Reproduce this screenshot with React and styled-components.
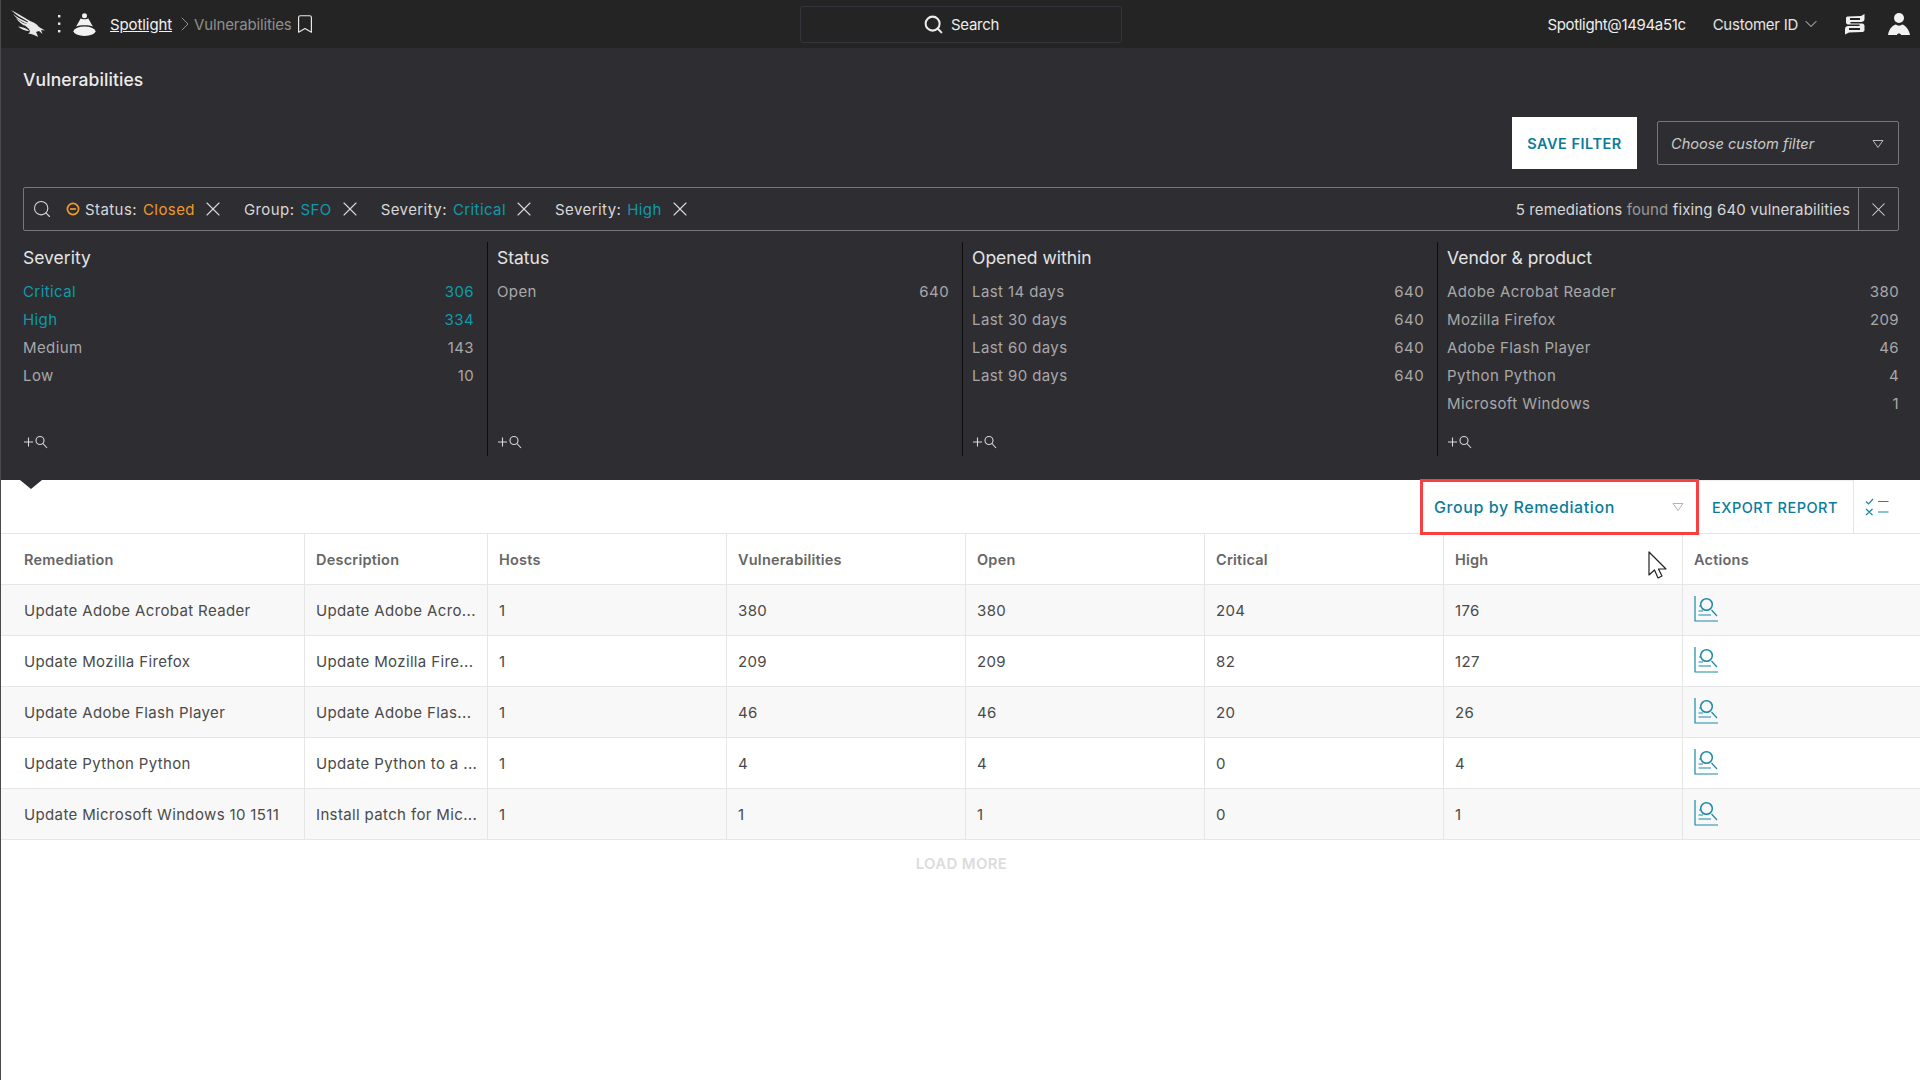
import React from "react";
import styled, { createGlobalStyle } from "styled-components";
import { ChevronDown, ChevronRight, Bookmark, Search, X } from "lucide-react";

const GlobalStyle = createGlobalStyle`
  html, body { margin: 0; padding: 0; background: #fff; }
  * { box-sizing: border-box; }
  body { font-family: Inter, "Liberation Sans", sans-serif; width: 1920px; height: 1080px; overflow: hidden; }
`;

const Page = styled.div`
  position: relative;
  width: 1920px;
  height: 1080px;
  border-left: 1px solid #4a4a4a;
`;

/* top bar */
const Header = styled.header`
  display: grid;
  grid-template-columns: 799px 322px 1fr;
  height: 48px;
  background: #242424;
  align-items: center;
`;
const Crumbs = styled.div`
  display: flex;
  align-items: center;
  padding-left: 9px;
  font-size: 15px;
  color: #8f8f8f;
`;
const CrumbLink = styled.a`
  color: #f2f2f2;
  text-decoration: underline;
  margin-left: 14px;
  letter-spacing: -0.1px;
`;
const CrumbArrow = styled(ChevronRight)`
  margin: 0 -3px 0 1px;
`;
const CrumbCurrent = styled.span`
  letter-spacing: -0.15px;
  margin-right: 2px;
`;
const TopSearch = styled.div`
  height: 37px;
  border: 1px solid #35333b;
  border-radius: 3px;
  display: flex;
  align-items: center;
  justify-content: center;
  gap: 7px;
  font-size: 15px;
  color: #ececec;
  letter-spacing: -0.3px;
`;
const HeaderRight = styled.div`
  display: flex;
  align-items: center;
  justify-content: flex-end;
  padding-right: 10px;
  color: #efefef;
  font-size: 15px;
  letter-spacing: -0.35px;
`;
const CustomerId = styled.span`
  display: flex;
  align-items: center;
  gap: 3px;
  margin: 0 23px 0 27px;
  color: #e6e6e6;
  letter-spacing: -0.25px;
`;

/* dark filter panel */
const Panel = styled.section`
  height: 432px;
  background: #2e2d32;
  padding: 0 21px 0 22px;
  position: relative;
`;
const PageTitle = styled.h1`
  margin: 0;
  padding-top: 21px;
  font-size: 17.5px;
  line-height: 22px;
  font-weight: 500;
  letter-spacing: 0.1px;
  color: #ececec;
`;
const FilterActions = styled.div`
  display: flex;
  justify-content: flex-end;
  align-items: center;
  gap: 20px;
  margin-top: 26px;
`;
const SaveFilter = styled.button`
  width: 125px;
  height: 52px;
  border: 0;
  background: #fff;
  color: #0b7c9c;
  font: 600 14.5px Inter, sans-serif;
  letter-spacing: 0.5px;
`;
const FilterSelect = styled.div`
  width: 242px;
  height: 44px;
  border: 1px solid #77767b;
  border-radius: 2px;
  display: flex;
  align-items: center;
  justify-content: space-between;
  padding: 2px 14px 0 13px;
  color: #c9c9c9;
  font-size: 14.6px;
  font-style: italic;
`;
const SearchBar = styled.div`
  display: flex;
  align-items: center;
  height: 44px;
  margin-top: 18px;
  border: 1px solid #77767b;
  border-radius: 2px;
  padding-left: 8px;
  font-size: 15px;
  color: #d8d8d8;
`;
const BarSearchIcon = styled(Search)`
  margin-right: 14px;
`;
const Chip = styled.span`
  display: inline-flex;
  align-items: center;
  margin-right: 19px;
  white-space: nowrap;
  letter-spacing: 0.42px;
`;
const ChipValue = styled.span`
  margin-left: 6px;
  margin-right: 6px;
  color: ${(p) => (p.$orange ? "#ef9a26" : "#0e9bab")};
`;
const BarSummary = styled.span`
  margin-left: auto;
  margin-right: 8px;
  color: #d8d8d8;
  white-space: nowrap;
  letter-spacing: 0.13px;
`;
const Muted = styled.span`
  color: #9a9a9a;
`;
const BarClose = styled.span`
  width: 40px;
  height: 100%;
  border-left: 1px solid #77767b;
  display: flex;
  align-items: center;
  justify-content: center;
`;
const Facets = styled.div`
  display: grid;
  grid-template-columns: 465px 466px 466px 1fr;
  gap: 9px;
  margin-top: 11px;
`;
const Facet = styled.div`
  height: 214px;
  display: flex;
  flex-direction: column;
  padding-right: ${(p) => (p.$last ? "0" : "13px")};
  border-right: ${(p) => (p.$last ? "0" : "1px solid #0d0d0f")};
`;
const FacetTitle = styled.div`
  font-size: 17.5px;
  line-height: 22px;
  margin: 5px 0 9px;
  color: #e4e4e4;
`;
const FacetRow = styled.div`
  display: flex;
  justify-content: space-between;
  height: 28px;
  line-height: 28px;
  font-size: 15px;
  letter-spacing: 0.4px;
  color: ${(p) => (p.$active ? "#0e9bab" : "#a8a8a8")};
`;
const FacetMore = styled.div`
  margin-top: auto;
  margin-bottom: 5px;
  height: 18px;
  display: flex;
  align-items: center;
`;
const Notch = styled.span`
  position: absolute;
  left: 19px;
  top: 432px;
  border-style: solid;
  border-width: 9px 11px 0 11px;
  border-color: #2e2d32 transparent transparent transparent;
`;

/* results */
const Toolbar = styled.div`
  display: flex;
  justify-content: flex-end;
  align-items: flex-start;
  height: 54px;
  border-bottom: 1px solid #e6e6e6;
`;
const GroupSelect = styled.div`
  width: 279px;
  height: 56px;
  margin-top: -1px;
  border: 3px solid #f84040;
  display: flex;
  align-items: center;
  justify-content: space-between;
  padding: 0 12px 0 11px;
  color: #0b7c9c;
  font-size: 16px;
  font-weight: 500;
  letter-spacing: 0.58px;
  position: relative;
`;
const ExportReport = styled.div`
  width: 155px;
  height: 53px;
  display: flex;
  align-items: center;
  padding-left: 13px;
  border-top: 1px solid #eee;
  border-right: 1px solid #e6e6e6;
  color: #0b7c9c;
  font-size: 14.5px;
  font-weight: 500;
  letter-spacing: 0.5px;
`;
const ToolbarIcon = styled.div`
  width: 66px;
  height: 53px;
  display: flex;
  align-items: center;
  padding-left: 11px;
`;
const Row = styled.div`
  display: grid;
  grid-template-columns: 303px 183px 239px 239px 239px 239px 239px 1fr;
  height: 51px;
  border-bottom: 1px solid #e6e6e6;
  background: ${(p) => (p.$shade ? "#f8f8f8" : "#fff")};
`;
const Cell = styled.div`
  display: flex;
  align-items: center;
  padding-left: ${(p) => (p.$first ? "23px" : "11px")};
  border-left: ${(p) => (p.$first ? "0" : "1px solid #e6e6e6")};
  font-size: 15px;
  letter-spacing: 0.36px;
  color: #4a4a4a;
  white-space: nowrap;
  overflow: hidden;
`;
const HeadCell = styled(Cell)`
  font-size: 14.5px;
  font-weight: 600;
  letter-spacing: 0.22px;
  color: #666;
`;
const LoadMore = styled.div`
  text-align: center;
  margin-top: 14px;
  padding-left: 2px;
  font-size: 15px;
  font-weight: 600;
  letter-spacing: 0.3px;
  color: #dcdcdc;
`;
const Cursor = styled.svg`
  position: absolute;
  left: 1646px;
  top: 551px;
`;

const DotsSvg = styled.svg`
  margin-left: 11px;
`;
const SpotlightSvg = styled.svg`
  margin-left: 12px;
`;
const UserSvg = styled.svg`
  margin-left: 23px;
`;
const BadgeSvg = styled.svg`
  margin-right: 5px;
`;
const ReviewSvg = styled.svg`
  margin-bottom: 3px;
`;

const FalconLogo = () => (
  <svg width="36" height="28" viewBox="0 0 36 28" fill="#e9e9e9">
    <path d="M1 0 C8 4 14 7 20 11 L17 11 C11 8 5 4 1 0 Z" />
    <path d="M3 4 C8 8 13 10 19 13 L15 13 C10 11 6 8 3 4 Z" />
    <path d="M6 8 C10 11 13 13 18 15 L14 15.5 C11 14 8 11 6 8 Z" />
    <path d="M17 10.5 C22 11 27 14 29 17 L35 20.5 L31 20 L32.5 24 L29 21 L26 22 C27 24 27.5 25 28 27 C25 25 22 24 18 23.5 C21 22.5 20 20 18 18 C16 17 15 15 14 13.5 C17 13.5 19 13 17 10.5 Z" />
    <path d="M8 16.5 C12 17 16 18 19.5 21 C15 21 11 19 8 16.5 Z" />
  </svg>
);
const Dots = () => (
  <DotsSvg width="4" height="20" viewBox="0 0 4 20" fill="#e9e9e9">
    <rect x="1" y="1" width="2.4" height="2.4" />
    <rect x="1" y="8.5" width="2.4" height="2.4" />
    <rect x="1" y="16" width="2.4" height="2.4" />
  </DotsSvg>
);
const SpotlightLogo = () => (
  <SpotlightSvg width="23" height="23" viewBox="0 0 22 22" fill="#f2f2f2">
    <circle cx="11" cy="2.6" r="2.4" />
    <path d="M7.5 5 C8 6.2 14 6.2 14.5 5 L19 13 C16 11.2 6 11.2 3 13 Z" />
    <ellipse cx="11" cy="17.5" rx="10.5" ry="4.5" />
  </SpotlightSvg>
);
const ServerIcon = () => (
  <svg width="21" height="22" viewBox="0 0 21 22" fill="#f0f0f0">
    <path d="M2 5 C2 4 3 3.5 4 3.5 L17 3 L20.5 1 L20.5 6 C20.5 8 19 9 17 9 L7 9 C6 9 6 10.5 7 10.5 L18 10.5 C20 10.5 20.5 12 20.5 13 L20.5 17 C20.5 18.5 19 19 18 19 L5 19.5 L1 21.5 L1 16 C1 14 2.5 13 4 13 L15 13 C16 13 16 11.5 15 11.5 L4 11.5 C2.5 11.5 2 10 2 9 Z M6 5 L6 7 L16 7 L16 5 Z M5 15 L5 17 L16 17 L16 15 Z" fillRule="evenodd" />
  </svg>
);
const UserIcon = () => (
  <UserSvg width="22" height="22" viewBox="0 0 22 22" fill="#f2f2f2">
    <circle cx="11" cy="5" r="5" />
    <path d="M0 22 C1 15 6 11.5 8 11.5 C9 13 13 13 14 11.5 C17 12 21 16 22 22 L13 22 C13 20 9 20 9 22 Z" />
  </UserSvg>
);
const MiniCaret = ({ color }) => (
  <svg width="12" height="10" viewBox="0 0 12 10" fill="none" stroke={color} strokeWidth="1">
    <path d="M1 1.5 H11 L6 8.5 Z" strokeLinejoin="round" />
  </svg>
);
const ClosedBadge = () => (
  <BadgeSvg width="14" height="14" viewBox="0 0 14 14" fill="none" stroke="#ef9a26" strokeWidth="1.7">
    <circle cx="7" cy="7" r="5.6" />
    <path d="M4 7 H10" />
  </BadgeSvg>
);
const AddSearch = () => (
  <svg width="26" height="14" viewBox="0 0 26 14" fill="none" stroke="#d8d8d8" strokeWidth="1.1">
    <path d="M1 7 H10 M5.5 2.5 V11.5" />
    <circle cx="17" cy="5.5" r="4" />
    <path d="M20 8.5 L24 13" />
  </svg>
);
const ChecklistIcon = () => (
  <svg width="24" height="18" viewBox="0 0 24 18" fill="none" stroke="#1488a8" strokeWidth="1.2">
    <path d="M1 3.5 L3.5 6 L8 1 M1 11 L7.5 17 M7.5 11 L1 17 M13 3.5 H23.5 M13 14 H23.5" />
  </svg>
);
const ReviewIcon = () => (
  <ReviewSvg width="24" height="26" viewBox="0 0 24 26" fill="none" stroke="#1c8aa6" strokeWidth="1.2">
    <path d="M1 0 V25 H24" />
    <circle cx="12.5" cy="8.5" r="5.8" strokeWidth="1.5" />
    <path d="M5 10 H7 M4.5 15 H9 M4.5 19 H17 M17.5 14 L23 20" />
  </ReviewSvg>
);

const chips = [
  { label: "Group", value: "SFO" },
  { label: "Severity", value: "Critical" },
  { label: "Severity", value: "High" },
];

const facets = [
  {
    title: "Severity",
    rows: [
      ["Critical", 306, true],
      ["High", 334, true],
      ["Medium", 143],
      ["Low", 10],
    ],
  },
  { title: "Status", rows: [["Open", 640]] },
  {
    title: "Opened within",
    rows: [
      ["Last 14 days", 640],
      ["Last 30 days", 640],
      ["Last 60 days", 640],
      ["Last 90 days", 640],
    ],
  },
  {
    title: "Vendor & product",
    rows: [
      ["Adobe Acrobat Reader", 380],
      ["Mozilla Firefox", 209],
      ["Adobe Flash Player", 46],
      ["Python Python", 4],
      ["Microsoft Windows", 1],
    ],
  },
];

const columns = ["Remediation", "Description", "Hosts", "Vulnerabilities", "Open", "Critical", "High", "Actions"];

const remediations = [
  ["Update Adobe Acrobat Reader", "Update Adobe Acro...", 1, 380, 380, 204, 176],
  ["Update Mozilla Firefox", "Update Mozilla Fire...", 1, 209, 209, 82, 127],
  ["Update Adobe Flash Player", "Update Adobe Flas...", 1, 46, 46, 20, 26],
  ["Update Python Python", "Update Python to a ...", 1, 4, 4, 0, 4],
  ["Update Microsoft Windows 10 1511", "Install patch for Mic...", 1, 1, 1, 0, 1],
];

export default function App() {
  return (
    <Page>
      <GlobalStyle />
      <Header>
        <Crumbs>
          <FalconLogo />
          <Dots />
          <SpotlightLogo />
          <CrumbLink>Spotlight</CrumbLink>
          <CrumbArrow size={24} strokeWidth={1} />
          <CrumbCurrent>Vulnerabilities</CrumbCurrent>
          <Bookmark size={22} strokeWidth={1.3} color="#e8e8e8" />
        </Crumbs>
        <TopSearch>
          <Search size={21} strokeWidth={2.3} />
          Search
        </TopSearch>
        <HeaderRight>
          Spotlight@1494a51c
          <CustomerId>
            Customer ID
            <ChevronDown size={20} strokeWidth={1.1} />
          </CustomerId>
          <ServerIcon />
          <UserIcon />
        </HeaderRight>
      </Header>

      <Panel>
        <PageTitle>Vulnerabilities</PageTitle>
        <FilterActions>
          <SaveFilter>SAVE FILTER</SaveFilter>
          <FilterSelect>
            Choose custom filter
            <MiniCaret color="#b9b9b9" />
          </FilterSelect>
        </FilterActions>
        <SearchBar>
          <BarSearchIcon size={20} strokeWidth={1.3} />
          <Chip>
            <ClosedBadge />
            Status:
            <ChipValue $orange>Closed</ChipValue>
            <X size={24} strokeWidth={1.1} />
          </Chip>
          {chips.map((c) => (
            <Chip key={c.value}>
              {c.label}:<ChipValue>{c.value}</ChipValue>
              <X size={24} strokeWidth={1.1} />
            </Chip>
          ))}
          <BarSummary>
            5 remediations <Muted>found</Muted> fixing 640 vulnerabilities
          </BarSummary>
          <BarClose>
            <X size={23} strokeWidth={1.1} />
          </BarClose>
        </SearchBar>
        <Facets>
          {facets.map((f, i) => (
            <Facet key={f.title} $last={i === 3}>
              <FacetTitle>{f.title}</FacetTitle>
              {f.rows.map(([label, count, active]) => (
                <FacetRow key={label} $active={active}>
                  <span>{label}</span>
                  <span>{count}</span>
                </FacetRow>
              ))}
              <FacetMore>
                <AddSearch />
              </FacetMore>
            </Facet>
          ))}
        </Facets>
        <Notch />
      </Panel>

      <Toolbar>
        <GroupSelect>
          Group by Remediation
          <MiniCaret color="#b5b5b5" />
        </GroupSelect>
        <ExportReport>EXPORT REPORT</ExportReport>
        <ToolbarIcon>
          <ChecklistIcon />
        </ToolbarIcon>
      </Toolbar>
      <Row>
        {columns.map((c, i) => (
          <HeadCell key={c} $first={i === 0}>
            {c}
          </HeadCell>
        ))}
      </Row>
      {remediations.map((r, i) => (
        <Row key={r[0]} $shade={i % 2 === 0}>
          {r.map((v, j) => (
            <Cell key={j} $first={j === 0}>
              {v}
            </Cell>
          ))}
          <Cell>
            <ReviewIcon />
          </Cell>
        </Row>
      ))}
      <LoadMore>LOAD MORE</LoadMore>
      <Cursor width="22" height="30" viewBox="0 0 22 30" fill="#fff" stroke="#222" strokeWidth="1.2">
        <path d="M2 1 V24 L7.5 19 L11 27 L15 25 L11.5 18 L19 18 Z" strokeLinejoin="round" />
      </Cursor>
    </Page>
  );
}
